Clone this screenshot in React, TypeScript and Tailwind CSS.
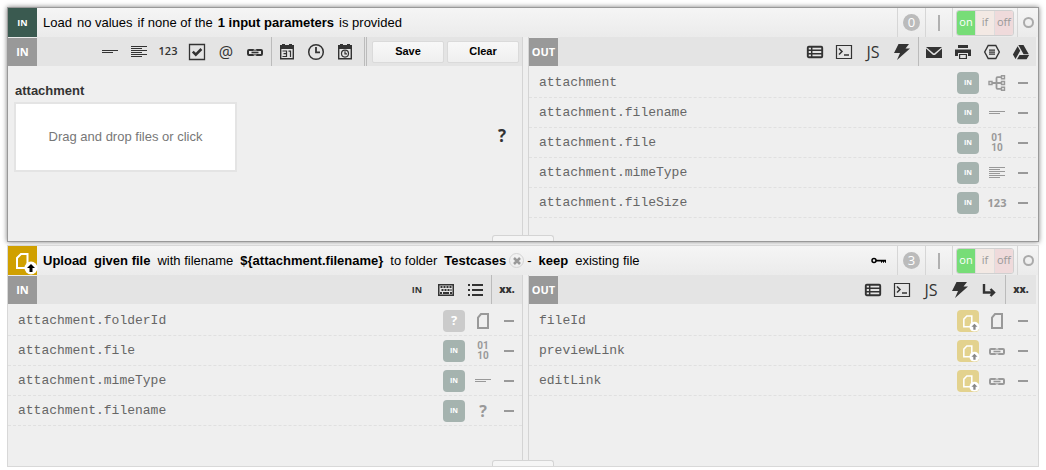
import type { ReactNode } from "react";

type IconName =
  | "line" | "para" | "check" | "link" | "calendar" | "clock" | "calclock" | "table"
  | "terminal" | "bolt" | "mail" | "print" | "hex" | "drive" | "tree" | "minus"
  | "keyboard" | "list" | "turn" | "doc" | "key";

const shapes: Record<IconName, ReactNode> = {
  line: <path fill="currentColor" d="M1 7h16v1H1zM1 9h11v1H1z" shapeRendering="crispEdges" />,
  para: (
    <path
      fill="currentColor"
      shapeRendering="crispEdges"
      d="M1 3h16v1H1zM1 5h11v1H1zM1 7h16v1H1zM1 9h11v1H1zM1 11h16v1H1zM1 13h11v1H1z"
    />
  ),
  check: (
    <>
      <path fill="none" stroke="currentColor" strokeWidth="1.300" d="M1.500 1.500h15v15h-15z" />
      <path fill="none" stroke="currentColor" strokeWidth="2.600" d="M4.800 8.600l3 3 5.600-5.600" />
    </>
  ),
  link: (
    <g fill="none" stroke="currentColor" strokeWidth="2">
      <path d="M8 7.700Q8 7 7 7H3Q2 7 2 8v3q0 1 1 1h4q1 0 1-.700" />
      <path d="M10 7.700Q10 7 11 7h4q1 0 1 1v3q0 1-1 1h-4q-1 0-1-.700" />
      <path strokeWidth="1.600" d="M5.500 9.500h7" />
    </g>
  ),
  calendar: (
    <>
      <path fill="currentColor" d="M2 2h14v4H2z" />
      <path fill="currentColor" d="M4 1h3v2H4zM11 1h3v2h-3z" />
      <path fill="none" stroke="currentColor" strokeWidth="1.400" d="M2.700 4v11.800h12.600V4" />
      <path fill="none" stroke="currentColor" strokeWidth="1.200" d="M4.500 8h4v5.500h-4M5.500 10.700h3M10.500 8.200h2V14" />
    </>
  ),
  clock: (
    <>
      <circle cx="9" cy="9" r="7.300" fill="none" stroke="currentColor" strokeWidth="1.500" />
      <path fill="none" stroke="currentColor" strokeWidth="1.800" d="M9 4v5.300h4" />
    </>
  ),
  calclock: (
    <>
      <path fill="currentColor" d="M2 2h14v4H2z" />
      <path fill="currentColor" d="M4 1h3v2H4zM11 1h3v2h-3z" />
      <path fill="none" stroke="currentColor" strokeWidth="1.400" d="M2.700 4v11.800h12.600V4" />
      <circle cx="9" cy="10.600" r="3.500" fill="none" stroke="currentColor" strokeWidth="1.200" />
      <path fill="none" stroke="currentColor" strokeWidth="1.200" d="M9 8.200v2.600h2" />
    </>
  ),
  table: (
    <>
      <rect x="1.800" y="3.800" width="14.400" height="10.400" rx="1" fill="none" stroke="currentColor" strokeWidth="1.900" />
      <path stroke="currentColor" strokeWidth="1.500" d="M2 7.200h14M2 10.700h14M5.700 4v10" />
    </>
  ),
  terminal: (
    <>
      <path fill="none" stroke="currentColor" strokeWidth="1.200" d="M1.500 2.500h15v13h-15z" />
      <path fill="none" stroke="currentColor" strokeWidth="1.500" d="M4 5.500l3 3-3 3M9 12h5" />
    </>
  ),
  bolt: <path fill="currentColor" d="M5.500 1H16l-3.500 4.500H17L4 17l3-7H1z" />,
  mail: (
    <path fill="currentColor" d="M1 5.500V15h16V5.500l-6.500 6Q9 12.700 7.500 11.500zM1 4l7.500 6.300q.5.400 1 0L17 4z" />
  ),
  print: (
    <path fill="currentColor" d="M4 2h10v3H4zM1 6.500h16V13h-3v-3H4v3H1zM5 11h8v5H5zm1.200 1v3h5.600v-3z" fillRule="evenodd" />
  ),
  hex: (
    <>
      <path fill="none" stroke="currentColor" strokeWidth="1.400" d="M5.200 2.500h7.600L16.300 9l-3.500 6.500H5.200L1.700 9z" />
      <path stroke="currentColor" strokeWidth="1.200" d="M6 7.200h6M6 9.200h6M6 11.200h6" />
    </>
  ),
  drive: (
    <path fill="currentColor" d="M6.300 2h5.200l5.300 9.200h-5.200zM5.600 3.200l2.600 4.600-4.700 8.200L.9 11.500zM7.500 12h9.700l-2.600 4.300H5z" />
  ),
  tree: (
    <g fill="none" stroke="currentColor" strokeWidth="1.400">
      <path d="M1 7.500h3v3H1zM13.500 1.700h3v3h-3zM13.500 7.500h3v3h-3zM13.500 13.300h3v3h-3z" />
      <path strokeWidth="1.800" d="M4 9h9M13 3.200H9.500Q8.500 3.200 8.500 4.200v9.600q0 1 1 1H13" />
    </g>
  ),
  minus: <path fill="currentColor" d="M4 8h10v2H4z" />,
  keyboard: (
    <>
      <path fill="currentColor" fillRule="evenodd" d="M1 3h16v12H1zm1.500 1.500v9h13v-9z" />
      <path stroke="currentColor" strokeWidth="2" strokeDasharray="2 1" d="M3.500 6h11M4.500 9h10" />
      <path stroke="currentColor" strokeWidth="2" d="M3 12h2M6 12h6M13 12h2" />
    </>
  ),
  list: <path fill="currentColor" d="M2 3h2v2H2zM6 3h11v2H6zM2 8h2v2H2zM6 8h11v2H6zM2 13h2v2H2zM6 13h11v2H6z" />,
  turn: (
    <path fill="none" stroke="currentColor" strokeWidth="2.400" d="M4 3v8.500h9.500M10.500 8l3.500 3.500-3.500 3.500" />
  ),
  doc: <path fill="none" stroke="currentColor" strokeWidth="2" d="M7 2h7v14H4V5.500z" />,
  key: (
    <>
      <circle cx="4" cy="8.500" r="2" fill="none" stroke="currentColor" strokeWidth="1.500" />
      <path fill="currentColor" d="M6 7.700h10v3h-1v-1h-1v1h-1v-1h-1v1h-1v-1.300H6z" />
    </>
  ),
};

function Icon({ name }: { name: IconName }) {
  return (
    <svg viewBox="0 0 18 18" className="size-[18px] shrink-0" aria-hidden="true">
      {shapes[name]}
    </svg>
  );
}

function Tool({ label, children }: { label: string; children: ReactNode }) {
  return (
    <button
      type="button"
      aria-label={label}
      className="flex h-[29px] w-[29px] shrink-0 items-center justify-center pr-px font-['Open_Sans',sans-serif] text-[#333]"
    >
      {children}
    </button>
  );
}

function Sep() {
  return <span className="mx-px w-px shrink-0 self-stretch bg-[#bbb]" />;
}

function Toolbar({ side, children }: { side: string; children: ReactNode }) {
  return (
    <div className="flex h-[29px] items-center bg-[#e4e4e4]">
      <span className="mr-auto flex w-[29px] items-center justify-center self-stretch border-t border-[#ececec] bg-[#999] font-['Open_Sans',sans-serif] text-[11px] font-bold text-white">
        {side}
      </span>
      {children}
    </div>
  );
}

function UploadMark() {
  return (
    <svg viewBox="0 0 29 29" className="size-full overflow-visible" aria-hidden="true">
      <path fill="none" stroke="#fff" strokeWidth="2" d="M13 8h6.500v14H9V12z" />
      <circle cx="23" cy="22" r="6.500" fill="#fff" />
      <path className="fill-current" d="M23 18l4 4h-2.500v4h-3v-4H19z" />
    </svg>
  );
}

type Source = "in" | "ask" | "upload";

function Badge({ source }: { source: Source }) {
  if (source === "upload") {
    return (
      <span className="size-[22px] shrink-0 rounded-[4px] bg-[#e3d28e] text-[#888]">
        <UploadMark />
      </span>
    );
  }
  if (source === "ask") {
    return (
      <span className="flex size-[22px] shrink-0 items-center justify-center rounded-[4px] bg-[#cbcbcb] font-['Open_Sans',sans-serif] text-[13px] font-bold text-white">
        ?
      </span>
    );
  }
  return (
    <span className="flex size-[22px] shrink-0 items-center justify-center rounded-[4px] bg-[#a5b3af] font-['Open_Sans',sans-serif] text-[7px] font-bold text-white">
      IN
    </span>
  );
}

type Kind = IconName | "bits" | "num" | "any";

function KindMark({ kind }: { kind: Kind }) {
  if (kind === "bits")
    return (
      <span className="flex flex-col text-center font-[Roboto,sans-serif] text-[10px] leading-[10px] font-bold">
        <span className="h-[10px]">01</span>
        <span className="h-[10px]">10</span>
      </span>
    );
  if (kind === "num") return <span className="text-[11px] font-bold">123</span>;
  if (kind === "any") return <span className="text-[16px] font-bold">?</span>;
  return <Icon name={kind} />;
}

type Field = { name: string; source: Source; kind: Kind };

function Fields({ items, className }: { items: Field[]; className: string }) {
  return (
    <ul className={`pt-[2px] ${className}`}>
      {items.map((f) => (
        <li key={f.name} className="flex h-[30px] items-start border-b border-dashed border-[#e0e0e0] pt-1">
          <span className="mr-auto pl-[10px] font-['Liberation_Mono',monospace] text-[13px] leading-[22px] text-[#666]">
            {f.name}
          </span>
          <Badge source={f.source} />
          <span className="ml-[5px] flex h-[22px] w-[26px] items-center justify-center font-['Open_Sans',sans-serif] text-[#999]">
            <KindMark kind={f.kind} />
          </span>
          <button
            type="button"
            aria-label={`Remove ${f.name}`}
            className="flex h-[22px] w-[26px] items-center justify-center text-[#999]"
          >
            <Icon name="minus" />
          </button>
        </li>
      ))}
    </ul>
  );
}

function Header({ tile, count, extra, children }: { tile: ReactNode; count: number; extra?: ReactNode; children: ReactNode }) {
  return (
    <header className="flex h-[29px] items-center bg-linear-to-b from-[#f5f5f5] to-[#ebebeb]">
      {tile}
      <h2 className="mr-auto pl-[6px] text-[13px] whitespace-nowrap text-black">{children}</h2>
      {extra}
      <div className="flex w-7 items-center justify-center self-stretch border-l border-[#d6d6d6]">
        <span className="flex size-[17px] items-center justify-center rounded-full bg-[#bbb] font-['Open_Sans',sans-serif] text-[13px] leading-none text-white">
          {count}
        </span>
      </div>
      <div className="flex w-[27px] items-center justify-center self-stretch border-l border-[#d6d6d6]">
        <span className="h-4 w-[2px] bg-[#b0b0b0]" />
      </div>
      <div className="flex w-[65px] items-center self-stretch border-l border-[#d6d6d6] pl-[3px]">
        <div className="flex h-[26px] w-[58px] overflow-hidden rounded-[3px] border border-[#d0d0d0] font-['Open_Sans',sans-serif] text-[11px]">
          <button type="button" aria-pressed="true" className="flex-1 bg-[#77dd77] text-white">on</button>
          <button type="button" aria-pressed="false" className="flex-1 border-x border-[#ddd] bg-[#f3e9e4] text-[#999]">if</button>
          <button type="button" aria-pressed="false" className="flex-1 bg-[#efdadb] text-[#999]">off</button>
        </div>
      </div>
      <div className="flex w-[21px] items-center justify-center self-stretch border-l border-[#d6d6d6]">
        <span className="size-[11px] rounded-full border-2 border-[#aaa]" />
      </div>
    </header>
  );
}

function Handle() {
  return (
    <button
      type="button"
      aria-label="Resize panel"
      className="absolute bottom-0 left-1/2 h-[6px] w-[62px] -translate-x-1/2 rounded-t-[3px] border border-b-0 border-[#d4d4d4] bg-[#f5f5f5]"
    />
  );
}

const loadOut: Field[] = [
  { name: "attachment", source: "in", kind: "tree" },
  { name: "attachment.filename", source: "in", kind: "line" },
  { name: "attachment.file", source: "in", kind: "bits" },
  { name: "attachment.mimeType", source: "in", kind: "para" },
  { name: "attachment.fileSize", source: "in", kind: "num" },
];

const uploadIn: Field[] = [
  { name: "attachment.folderId", source: "ask", kind: "doc" },
  { name: "attachment.file", source: "in", kind: "bits" },
  { name: "attachment.mimeType", source: "in", kind: "line" },
  { name: "attachment.filename", source: "in", kind: "any" },
];

const uploadOut: Field[] = [
  { name: "fileId", source: "upload", kind: "doc" },
  { name: "previewLink", source: "upload", kind: "link" },
  { name: "editLink", source: "upload", kind: "link" },
];

const leftPane = "w-1/2 border-r border-[#d4d4d4]";
const rightPane = "mr-[2px] ml-[5px] flex-1 border-l border-[#d4d4d4]";
const action =
  "h-[22px] w-[72px] rounded-[2px] border border-[#dadada] bg-linear-to-b from-[#f8f8f8] to-[#efefef] text-[11px] font-bold text-black";

export default function App() {
  return (
    <main className="flex flex-col gap-[3px] bg-white p-[7px] pb-[3px] font-['Liberation_Sans',Arial,sans-serif]">
      <section className="relative border border-[#999] bg-[#efefef] shadow-[0_0_5px_rgba(0,0,0,0.5)]">
        <Header
          count={0}
          tile={
            <span className="flex w-[29px] items-center justify-center self-stretch bg-[#3a5a50] font-['Open_Sans',sans-serif] text-[9px] font-bold text-white">
              IN
            </span>
          }
        >
          <span className="flex items-center gap-[5px]">
            <span>Load</span>
            <span>no values</span>
            <span>if none of the</span>
            <b>1 input parameters</b>
            <span>is provided</span>
          </span>
        </Header>
        <div className="flex">
          <div className={leftPane}>
            <Toolbar side="IN">
              <Tool label="Text line"><Icon name="line" /></Tool>
              <Tool label="Paragraph"><Icon name="para" /></Tool>
              <Tool label="Number"><span className="text-[11px] font-semibold">123</span></Tool>
              <Tool label="Checkbox"><Icon name="check" /></Tool>
              <Tool label="Email"><span className="text-[16px] leading-none">@</span></Tool>
              <Tool label="Link"><Icon name="link" /></Tool>
              <Sep />
              <Tool label="Date"><Icon name="calendar" /></Tool>
              <Tool label="Time"><Icon name="clock" /></Tool>
              <Tool label="Date and time"><Icon name="calclock" /></Tool>
              <span className="mr-[5px] ml-1 w-[3px] self-stretch border-x border-[#bbb]" />
              <div className="mr-[3px] flex gap-[3px]">
                <button type="button" className={action}>Save</button>
                <button type="button" className={action}>Clear</button>
              </div>
            </Toolbar>
            <div className="flex items-center pt-[14px] pr-4 pl-[6px]">
              <label className="block cursor-pointer">
                <span className="block pl-px text-[13px] leading-[22px] font-bold text-[#333]">attachment</span>
                <span className="flex h-[70px] w-[223px] items-center justify-center border-2 border-[#e4e4e4] bg-white text-[13px] text-[#777]">
                  Drag and drop files or click
                </span>
                <input type="file" className="sr-only" />
              </label>
              <button type="button" aria-label="Help" className="mt-5 ml-auto font-['Open_Sans',sans-serif] text-[17px] font-bold text-[#333]">
                ?
              </button>
            </div>
          </div>
          <div className={rightPane}>
            <Toolbar side="OUT">
              <Tool label="Table"><Icon name="table" /></Tool>
              <Tool label="Console"><Icon name="terminal" /></Tool>
              <Tool label="JavaScript"><span className="text-[16px]">JS</span></Tool>
              <Tool label="Trigger"><Icon name="bolt" /></Tool>
              <Sep />
              <Tool label="Mail"><Icon name="mail" /></Tool>
              <Tool label="Print"><Icon name="print" /></Tool>
              <Tool label="Service"><Icon name="hex" /></Tool>
              <Tool label="Drive"><Icon name="drive" /></Tool>
            </Toolbar>
            <Fields items={loadOut} className="pb-[23px]" />
          </div>
        </div>
        <Handle />
      </section>

      <section className="relative border border-[#d8d8d8] bg-[#efefef]">
        <Header
          count={3}
          extra={
            <button type="button" aria-label="Credentials" className="mr-[9px] text-black">
              <Icon name="key" />
            </button>
          }
          tile={
            <span className="size-[29px] shrink-0 bg-[#d0a000] text-black">
              <UploadMark />
            </span>
          }
        >
          <span className="flex items-center gap-[7px]">
            <b>Upload</b>
            <b>given file</b>
            <span>with filename</span>
            <b>{"${attachment.filename}"}</b>
            <span>to folder</span>
            <span className="flex items-center gap-[3px]">
              <b>Testcases</b>
              <button
                type="button"
                aria-label="Clear folder"
                className="flex size-[15px] items-center justify-center rounded-full border border-[#d4d4d4] text-[#999]"
              >
                <svg viewBox="0 0 8 8" className="size-2" aria-hidden="true">
                  <path stroke="currentColor" strokeWidth="2.500" d="M1 1l6 6M7 1L1 7" />
                </svg>
              </button>
              <span>-</span>
            </span>
            <b>keep</b>
            <span>existing file</span>
          </span>
        </Header>
        <div className="flex">
          <div className={leftPane}>
            <Toolbar side="IN">
              <Tool label="Input"><span className="text-[9px] font-bold">IN</span></Tool>
              <Tool label="Keyboard"><Icon name="keyboard" /></Tool>
              <Tool label="List"><Icon name="list" /></Tool>
              <Sep />
              <Tool label="Prefix"><span className="text-[10px] font-extrabold">xx.</span></Tool>
            </Toolbar>
            <Fields items={uploadIn} className="pb-10" />
          </div>
          <div className={rightPane}>
            <Toolbar side="OUT">
              <Tool label="Table"><Icon name="table" /></Tool>
              <Tool label="Console"><Icon name="terminal" /></Tool>
              <Tool label="JavaScript"><span className="text-[16px]">JS</span></Tool>
              <Tool label="Trigger"><Icon name="bolt" /></Tool>
              <Tool label="Next"><Icon name="turn" /></Tool>
              <Sep />
              <Tool label="Prefix"><span className="text-[10px] font-extrabold">xx.</span></Tool>
            </Toolbar>
            <Fields items={uploadOut} className="pb-10" />
          </div>
        </div>
        <Handle />
      </section>
    </main>
  );
}
